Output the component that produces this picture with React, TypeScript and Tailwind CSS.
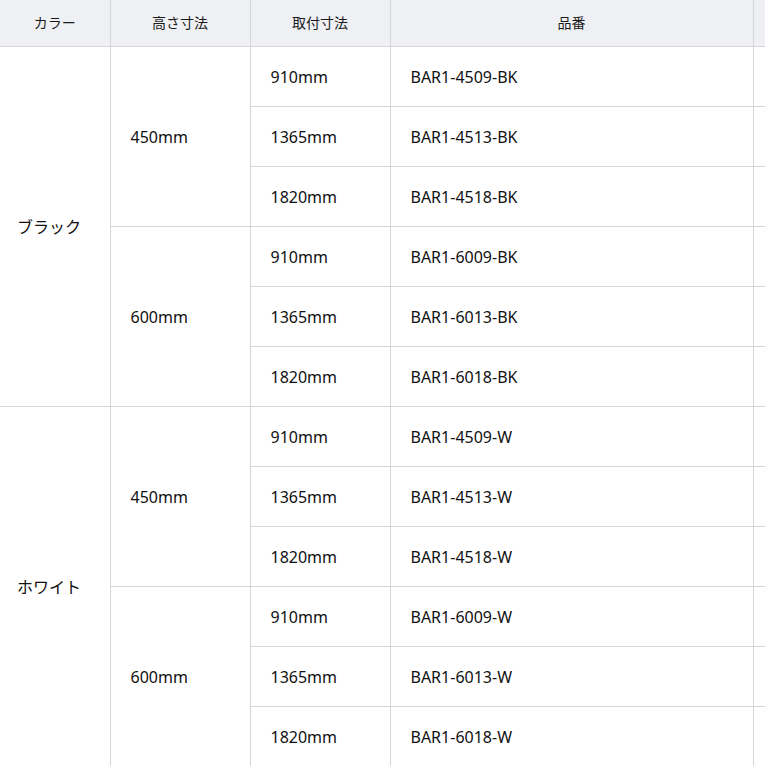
import React from 'react';

// ─── Data ─────────────────────────────────────────────────────────────
type Group = { color: string; suffix: string };

const groups: Group[] = [
  { color: 'ブラック', suffix: 'BK' },
  { color: 'ホワイト', suffix: 'W' },
];

const heights = [
  { label: '450mm', code: '45' },
  { label: '600mm', code: '60' },
];

const widths = [
  { label: '910mm', code: '09' },
  { label: '1365mm', code: '13' },
  { label: '1820mm', code: '18' },
];

const th = 'h-[46px] border-b border-r border-[#d6d6d6] bg-[#eef0f3] text-center text-[14px] font-normal text-[#1a1a1a]';
const td = 'h-[60px] border-b border-r border-[#d6d6d6] pt-[2px] text-left align-middle text-[16px] text-[#111]';

// ─── Main Component ──────────────────────────────────────────────────
export default function App() {
  return (
    <div className="w-[765px] h-[766px] overflow-hidden bg-white" style={{ fontFamily: '"Noto Sans", "Noto Sans CJK JP", sans-serif' }}>
      <table className="w-[900px] table-fixed border-collapse">
        <colgroup>
          <col className="w-[110px]" />
          <col className="w-[140px]" />
          <col className="w-[140px]" />
          <col className="w-[363px]" />
          <col className="w-[147px]" />
        </colgroup>
        <thead>
          <tr>
            <th className={th}>カラー</th>
            <th className={th}>高さ寸法</th>
            <th className={th}>取付寸法</th>
            <th className={th}>品番</th>
            <th className={th}></th>
          </tr>
        </thead>
        <tbody>
          {groups.map((g) =>
            heights.map((h, hi) =>
              widths.map((w, wi) => (
                <tr key={`${g.suffix}-${h.code}-${w.code}`}>
                  {hi === 0 && wi === 0 && (
                    <td rowSpan={6} className={`${td} pl-[17px]`}>{g.color}</td>
                  )}
                  {wi === 0 && (
                    <td rowSpan={3} className={`${td} pl-[20px]`}>{h.label}</td>
                  )}
                  <td className={`${td} pl-[20px]`}>{w.label}</td>
                  <td className={`${td} pl-[20px]`}>{`BAR1-${h.code}${w.code}-${g.suffix}`}</td>
                  <td className={td}></td>
                </tr>
              ))
            )
          )}
        </tbody>
      </table>
    </div>
  );
}
